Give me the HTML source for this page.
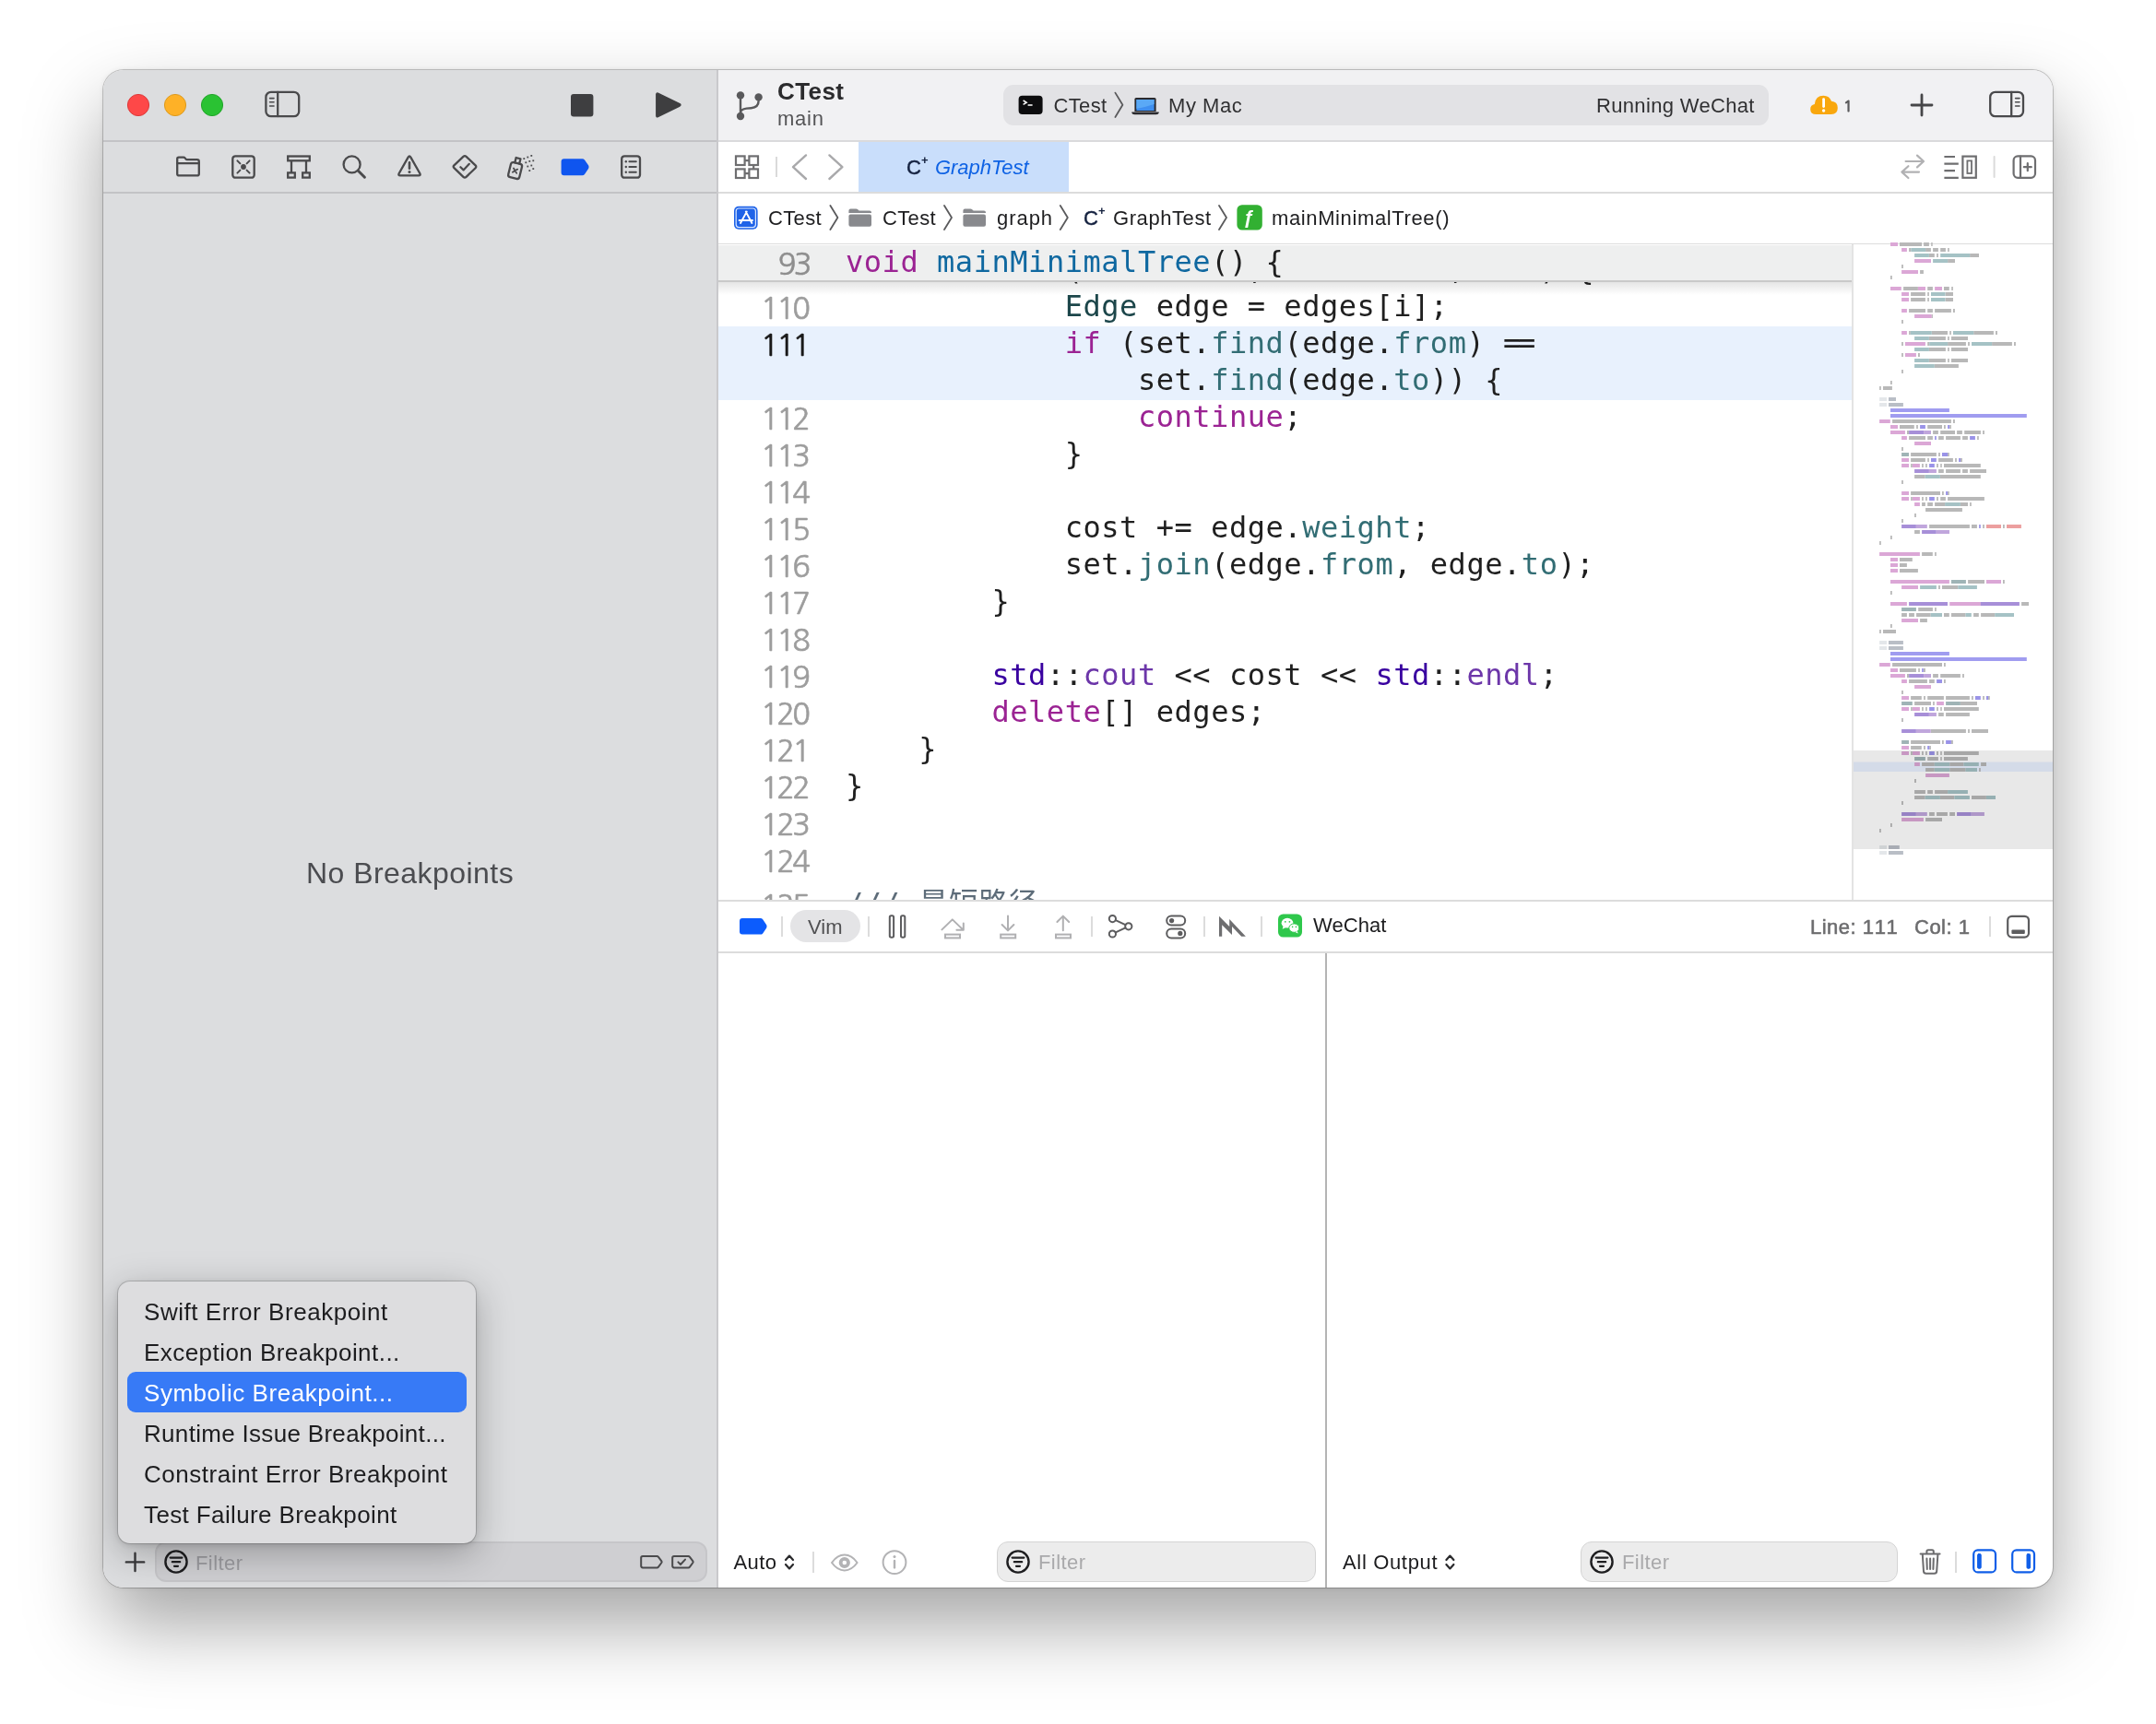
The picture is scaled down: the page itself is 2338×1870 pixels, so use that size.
<!DOCTYPE html>
<html lang="en">
<head>
<meta charset="utf-8">
<title>CTest — GraphTest</title>
<style>
*{box-sizing:border-box;margin:0;padding:0}
html,body{width:2338px;height:1870px;overflow:hidden;background:#fff}
body{position:relative;font-family:"Liberation Sans","Noto Sans CJK SC",sans-serif;color:#262626;-webkit-font-smoothing:antialiased}
#win{position:absolute;left:112px;top:76px;width:2114px;height:1646px;border-radius:22px;overflow:hidden;background:#fff;
  box-shadow:0 0 0 1px rgba(0,0,0,.20),0 40px 84px rgba(0,0,0,.36),0 0 6px rgba(0,0,0,.08)}
#pg{position:absolute;left:-112px;top:-76px;width:2338px;height:1870px;will-change:transform}
.a{position:absolute}
.t{position:absolute;white-space:pre;line-height:1}
svg{position:absolute;overflow:visible}
/* sidebar */
#side{left:112px;top:76px;width:665px;height:1646px;background:#dcdddf}
#sdiv{left:777px;top:76px;width:2px;height:1646px;background:#c9c9cc}
.hl{position:absolute;height:2px}
/* toolbar */
#tbar{left:779px;top:76px;width:1447px;height:76px;background:#f1f1f3}
#pill{left:1088px;top:92px;width:830px;height:44px;border-radius:11px;background:#e2e2e5}
#tabs{left:779px;top:154px;width:1447px;height:54px;background:#fff}
#tabsel{left:931px;top:154px;width:228px;height:54px;background:#c9defb}
#crumb{left:779px;top:210px;width:1447px;height:54px;background:#fff}
/* editor */
#ed{left:779px;top:265px;width:1230px;height:712px;background:#fff;overflow:hidden}
#sticky{left:779px;top:266px;width:1230px;height:38px;background:#eeefef}
#stickyline{left:779px;top:304px;width:1230px;height:2px;background:#c9c9c9}
#stickysh{left:779px;top:306px;width:1230px;height:14px;background:linear-gradient(rgba(0,0,0,.10),rgba(0,0,0,0))}
#cur{left:779px;top:354px;width:1230px;height:80px;background:#e8f1fd}
.ln{position:absolute;left:779px;width:97.5px;text-align:right;font-family:"NanumGothic","Liberation Sans",sans-serif;font-size:32.5px;-webkit-text-stroke:.6px currentColor;color:#9d9d9d;line-height:40px;height:40px;white-space:pre}
.ln span{display:inline-block;width:17.2px;text-align:left}
.cl{position:absolute;left:917px;font-family:"DejaVu Sans Mono","Liberation Mono","Noto Sans CJK SC",monospace;font-size:32px;letter-spacing:.54px;line-height:40px;height:40px;white-space:pre;color:#1f1f1f}
.eq{letter-spacing:-3.4px}.k{color:#9b2393}.fn{color:#0f68a0}.ty{color:#1c464a}.m{color:#326d74}.p{color:#3900a0}.pf{color:#6c36a9}.cm{color:#5d6c79}
/* minimap */
#mm{left:2009px;top:265px;width:217px;height:712px;background:#fff}
#mmline{left:2008px;top:265px;width:2px;height:712px;background:#e3e3e3}
/* debug bar */
#dbar{left:779px;top:979px;width:1447px;height:53px;background:#fff}
#vim{left:857px;top:987px;width:76px;height:35px;border-radius:17.5px;background:#e4e4e6}
.vs{position:absolute;width:2px;background:#dcdcdc}
#split{left:1437px;top:1034px;width:2px;height:688px;background:#b4b4b4}
.ff{position:absolute;height:44px;border-radius:12px;border:1.5px solid #d4d4d4;background:#ececec}
#sff{left:168px;top:1672px;width:599px;height:44px;border-radius:12px;position:absolute;background:#cfcfd2;border:2px solid #c6c6c9}
/* menu */
#menu{left:128px;top:1390px;width:388px;height:284px;border-radius:13px;background:#dddddf;
  box-shadow:0 0 0 1px rgba(0,0,0,.16),0 10px 40px rgba(0,0,0,.28),0 2px 6px rgba(0,0,0,.12)}
#msel{left:138px;top:1488px;width:368px;height:44px;border-radius:9px;background:#377af6}
.mi{position:absolute;left:156px;font-size:26px;letter-spacing:.54px;color:#1d1d1f;white-space:pre;line-height:44px;height:44px}
</style>
</head>
<body>
<div id="win"><div id="pg">
<!-- ===== sidebar ===== -->
<div class="a" id="side"></div>
<div class="hl" style="left:112px;top:152px;width:665px;background:#c3c3c6"></div>
<div class="hl" style="left:112px;top:208px;width:665px;background:#c3c3c6"></div>
<!-- traffic lights -->
<svg style="left:136px;top:100px" width="108" height="28" viewBox="136 100 108 28">
 <circle cx="150" cy="114" r="11.6" fill="#fe4848" stroke="#dc3a3a" stroke-width="1"/>
 <circle cx="190" cy="114" r="11.6" fill="#feb127" stroke="#dc9a1f" stroke-width="1"/>
 <circle cx="230" cy="114" r="11.6" fill="#2ac233" stroke="#22a52a" stroke-width="1"/>
</svg>
<!-- sidebar toggle -->
<svg style="left:285px;top:96px" width="44" height="34" viewBox="285 96 44 34" fill="none" stroke="#4a4a4c" stroke-width="2.3" stroke-linecap="round">
 <rect x="288.4" y="99.8" width="35.8" height="26.4" rx="5.5"/>
 <path d="M301.2 100v26"/>
 <path d="M292.6 106.600h4.400M292.6 110.800h4.400M292.6 115h4.400" stroke-width="1.600"/>
</svg>
<!-- stop / play -->
<svg style="left:615px;top:96px" width="130" height="36" viewBox="615 96 130 36">
 <rect x="619" y="102" width="24.4" height="24.4" rx="3" fill="#3e3e40"/>
 <path d="M713.4 101.2 L737 112.6 Q739 113.8 737 115 L713.4 126.6 Q711.8 127.2 711.8 125.4 L711.8 102.4 Q711.8 100.6 713.4 101.2Z" fill="#3e3e40" stroke="#3e3e40" stroke-width="1.4" stroke-linejoin="round"/>
</svg>
<!-- navigator icons -->
<svg style="left:186px;top:162px" width="520" height="38" viewBox="186 162 520 38" fill="none" stroke="#4a4a4c" stroke-width="2.3" stroke-linecap="round" stroke-linejoin="round">
 <!-- folder -->
 <path d="M192.2 174.4v-2.2q0-1.6 1.6-1.6h5.2q1 0 1.6.8l.8 1q.6.8 1.6.8h10.8q2 0 2 2v13.2q0 2-2 2h-19.600q-2 0-2-2z"/>
 <path d="M192.2 177.200h23.600"/>
 <!-- box x -->
 <rect x="252.300" y="169.300" width="23.400" height="23.400" rx="3"/>
 <circle cx="264" cy="181" r="2.900" fill="#4a4a4c" stroke="none"/>
 <path d="M257.400 174.400l3 3M270.600 174.400l-3 3M257.400 187.600l3-3M270.600 187.600l-3-3" stroke-width="2"/>
 <!-- hierarchy -->
 <rect x="312.200" y="169.500" width="23.600" height="4.800" stroke-linejoin="miter"/>
 <path d="M316 174.500v12.500M332 174.500v12.500" stroke-linecap="butt"/>
 <rect x="312.200" y="187.400" width="7.600" height="5.200" stroke-linejoin="miter"/>
 <rect x="328.200" y="187.400" width="7.600" height="5.200" stroke-linejoin="miter"/>
 <!-- search -->
 <circle cx="381.600" cy="178.400" r="9"/>
 <path d="M388.400 185.200l7 7" stroke-width="3"/>
 <!-- warning -->
 <path d="M442.600 170.600q1.400-2.200 2.800 0l10 17.600q1 2.200-1.400 2.200h-20q-2.400 0-1.400-2.200z"/>
 <path d="M444 176.400v6.400" stroke-width="2.600"/>
 <circle cx="444" cy="186.400" r="1.500" fill="#4a4a4c" stroke="none"/>
 <!-- diamond check -->
 <path d="M502.400 169.800q1.600-1.400 3.200 0l10 9.600q1.400 1.400 0 2.800l-10 9.600q-1.600 1.400-3.200 0l-10-9.600q-1.400-1.400 0-2.800z"/>
 <path d="M499.400 181.200l3.200 3.200 6.200-6.600" stroke-width="2.200"/>
 <!-- spray -->
 <g transform="translate(1.6 -.4) rotate(14 558 184)">
  <rect x="551.200" y="177.400" width="12.400" height="16.400" rx="2.600"/>
  <path d="M555 177.200v-5.400h5v5.400" />
  <path d="M555.200 183.600l4.400 4.400M559.600 183.600l-4.400 4.400" stroke-width="1.800"/>
 </g>
 <g fill="#4a4a4c" stroke="none">
  <rect x="567.400" y="171.200" width="1.800" height="1.800"/><rect x="571.400" y="169.600" width="1.800" height="1.800"/><rect x="575.400" y="168" width="1.800" height="1.800"/>
  <rect x="569.400" y="175.400" width="1.800" height="1.800"/><rect x="573.400" y="174" width="1.800" height="1.800"/><rect x="577.400" y="173.400" width="1.800" height="1.800"/>
  <rect x="571.400" y="179.600" width="1.800" height="1.800"/><rect x="575.400" y="178.600" width="1.800" height="1.800"/>
  <rect x="573.400" y="184.200" width="1.800" height="1.800"/><rect x="577.400" y="182.200" width="1.800" height="1.800"/>
 </g>
 <!-- breakpoint -->
 <path d="M611.600 172.200h19.800q1.600 0 2.600 1.200l4.200 6.200q.8 1.600 0 3.200l-4.200 6.200q-1 1.200-2.600 1.200h-19.800q-3 0-3-3v-12q0-3 3-3z" fill="#0f55ef" stroke="none"/>
 <!-- report -->
 <rect x="674.200" y="169.300" width="19.800" height="23.400" rx="3"/>
 <path d="M682.400 175.200h7.400M682.400 181h7.400M682.400 186.800h7.400" stroke-width="2"/>
 <g fill="#4a4a4c" stroke="none"><circle cx="678.800" cy="175.200" r="1.200"/><circle cx="678.800" cy="181" r="1.200"/><circle cx="678.800" cy="186.800" r="1.200"/></g>
</svg>
<div class="t" style="left:332px;top:931px;font-size:32px;letter-spacing:.45px;color:#4b4c50">No Breakpoints</div>
<!-- sidebar bottom filter -->
<div id="sff"></div>
<svg style="left:132px;top:1676px" width="640" height="36" viewBox="132 1676 640 36" fill="none" stroke="#2a2a2c" stroke-width="2.2" stroke-linecap="round" stroke-linejoin="round">
 <path d="M136.800 1694.400h19.400M146.500 1684.700v19.400" stroke="#3a3a3c" stroke-width="2.400"/>
 <circle cx="191" cy="1694" r="11.600" stroke="#1e1e20" stroke-width="2.400"/>
 <path d="M184.600 1689.600h12.800M186.800 1694.200h8.400M189 1698.800h4" stroke="#1e1e20" stroke-width="2.200"/>
 <path d="M697 1688h15.400q1 0 1.600.8l3.400 4.600q.6.800 0 1.600l-3.400 4.600q-.6.800-1.600.8h-15.400q-1.800 0-1.800-1.800v-8.800q0-1.800 1.800-1.800z" stroke="#4a4a4c" stroke-width="2"/>
 <path d="M731 1688h15.400q1 0 1.600.8l3.400 4.600q.6.800 0 1.600l-3.400 4.600q-.6.800-1.600.8h-15.400q-1.800 0-1.800-1.800v-8.800q0-1.800 1.800-1.800z" stroke="#4a4a4c" stroke-width="2"/>
 <path d="M735.400 1694.400l2.600 2.600 5-5.400" stroke="#4a4a4c" stroke-width="2"/>
</svg>
<div class="t" style="left:212px;top:1684.500px;font-size:22px;letter-spacing:.43px;color:#9c9ca0">Filter</div>
<!-- ===== toolbar ===== -->
<div class="a" id="tbar"></div>
<div class="hl" style="left:779px;top:152px;width:1447px;background:#dadadc"></div>
<div class="a" id="sdiv"></div>
<!-- branch icon -->
<svg style="left:794px;top:94px" width="40" height="42" viewBox="794 94 40 42" fill="none" stroke="#59595b" stroke-width="2.4" stroke-linecap="round">
 <path d="M803 107v15M822.600 109.600q0 7-8 7.600l-5 .4q-6.600.6-6.600 5"/>
 <g fill="#59595b" stroke="none"><circle cx="803" cy="103.400" r="4.200"/><circle cx="803" cy="126" r="4.200"/><circle cx="822.600" cy="105.400" r="4.200"/></g>
</svg>
<div class="t" style="left:843px;top:86px;font-size:26px;font-weight:700;color:#2b2b2d;letter-spacing:.4px">CTest</div>
<div class="t" style="left:843px;top:118px;font-size:22px;color:#555557;letter-spacing:.75px">main</div>
<div class="a" id="pill"></div>
<!-- terminal icon -->
<svg style="left:1104px;top:103px" width="28" height="22" viewBox="1104 103 28 22">
 <rect x="1104.600" y="103.800" width="26" height="20.200" rx="4" fill="#0c0c0e"/>
 <path d="M1109.600 109l3.600 2.200-3.600 2.200M1114.600 114h5" fill="none" stroke="#fff" stroke-width="1.500"/>
</svg>
<div class="t" style="left:1142.5px;top:103.5px;font-size:22px;letter-spacing:.35px;color:#303032">CTest</div>
<svg style="left:1206px;top:98px" width="16" height="32" viewBox="1206 98 16 32" fill="none" stroke="#5a5a5c" stroke-width="1.800" stroke-linecap="round" stroke-linejoin="round"><path d="M1209.400 100.600l8 13.200-8 13.200"/></svg>
<!-- laptop -->
<svg style="left:1226px;top:104px" width="32" height="22" viewBox="1226 104 32 22">
 <path d="M1232 106h20q1.600 0 1.600 1.600v13.400h-23.200v-13.400q0-1.600 1.600-1.600z" fill="#2a2a2e"/>
 <rect x="1232.400" y="108" width="19.200" height="12" fill="#3f8ff0"/>
 <path d="M1232.400 108h19.200v5q-9 3-19.200 5z" fill="#5aa9f6"/>
 <path d="M1227.600 121.400h28.800q.6 0 .4.800-.6 2-3 2h-23.600q-2.400 0-3-2-.2-.8.400-.8z" fill="#2a2a2e"/>
</svg>
<div class="t" style="left:1267px;top:103.5px;font-size:22px;letter-spacing:.55px;color:#303032">My Mac</div>
<div class="t" style="left:1731px;top:103.5px;font-size:22px;letter-spacing:.33px;color:#303032">Running WeChat</div>
<!-- cloud warning -->
<svg style="left:1961px;top:102px" width="34" height="24" viewBox="1961 102 34 24">
 <path d="M1969.600 124q-6.400 0-6.400-5.600 0-4.600 4.600-5.400 1-9.200 9.600-9.200 6.600 0 8.600 6 6.800.6 6.800 7.200 0 7-7 7z" fill="#f9a70d"/>
 <path d="M1977.600 107.600v8" stroke="#fff" stroke-width="2.800" stroke-linecap="round"/><circle cx="1977.600" cy="120" r="1.700" fill="#fff"/>
</svg>
<div class="t" style="left:1999px;top:107px;font-size:16.5px;font-family:NanumGothic,'Liberation Sans',sans-serif;color:#5a5a5c;-webkit-text-stroke:1px #5a5a5c">1</div>
<svg style="left:2068px;top:98px" width="32" height="32" viewBox="2068 98 32 32" fill="none" stroke="#464648" stroke-width="2.800" stroke-linecap="round"><path d="M2073 114h22M2084 103v22"/></svg>
<svg style="left:2153px;top:95px" width="46" height="36" viewBox="2153 95 46 36" fill="none" stroke="#4a4a4c" stroke-width="2.300" stroke-linecap="round">
 <rect x="2158.200" y="99.800" width="35.800" height="26.400" rx="5.500"/>
 <path d="M2181.200 100v26"/>
 <path d="M2185.600 106.600h4.400M2185.600 110.800h4.400M2185.600 115h4.400" stroke-width="1.600"/>
</svg>
<!-- ===== tab bar ===== -->
<div class="a" id="tabs"></div>
<div class="a" id="tabsel"></div>
<div class="hl" style="left:779px;top:208px;width:1447px;background:#dcdcdc"></div>
<svg style="left:794px;top:165px" width="130" height="32" viewBox="794 165 130 32" fill="none" stroke="#6e6e70" stroke-width="2.200">
 <rect x="798" y="169.400" width="9.600" height="9.600"/><rect x="812.400" y="169.400" width="9.600" height="9.600"/>
 <rect x="798" y="183.400" width="9.600" height="9.600"/><rect x="812.400" y="183.400" width="9.600" height="9.600"/>
 <path d="M807.600 174.200h4.800M817.200 179v4.400M807.600 188.200h4.800" />
 <path d="M842 170v22" stroke="#dadada" stroke-width="2"/>
 <path d="M874 168.400l-14 12.800 14 12.800M899.400 168.400l14 12.800-14 12.800" stroke="#a9a9ab" stroke-width="2.400" stroke-linecap="round" stroke-linejoin="round"/>
</svg>
<div class="t" style="left:983px;top:171px;font-size:22px;color:#14213f;-webkit-text-stroke:.45px #14213f">C</div>
<div class="t" style="left:999px;top:167px;font-size:13px;font-weight:700;color:#14213f">+</div>
<div class="t" style="left:1014px;top:171px;font-size:22px;font-style:italic;color:#0e62e4;letter-spacing:-.05px">GraphTest</div>
<svg style="left:2058px;top:165px" width="154" height="32" viewBox="2058 165 154 32" fill="none" stroke="#6e6e70" stroke-width="2.200" stroke-linecap="round" stroke-linejoin="round">
 <g stroke="#b1b1b3"><path d="M2066.600 175h19.200M2079 168.600l7 6.400-7 6.400M2081 186.600h-18.600M2069.400 180.200l-7 6.400 7 6.400"/></g>
 <path d="M2108.400 170h11.600M2108.400 177.600h15.400M2108.400 185.200h11.600M2108.400 192.800h15.400" stroke-linecap="butt"/>
 <rect x="2128.400" y="169.600" width="14.400" height="23.200" stroke-linejoin="miter"/>
 <rect x="2133.400" y="174.400" width="4.600" height="13.600" stroke-width="1.800" stroke-linejoin="miter"/>
 <path d="M2162.600 170v22" stroke="#dadada" stroke-width="2"/>
 <rect x="2183.600" y="169.400" width="23.400" height="23.400" rx="4.500"/>
 <path d="M2191 169.600v23M2194.800 181.200h8M2198.800 177.200v8"/>
</svg>
<!-- ===== breadcrumb ===== -->
<div class="a" id="crumb"></div>
<div class="hl" style="left:779px;top:264px;width:1447px;background:#dcdcdc"></div>
<svg style="left:794px;top:220px" width="790" height="32" viewBox="794 220 790 32">
 <!-- app icon -->
 <rect x="796" y="223.800" width="25.600" height="25" rx="5" fill="#1f63e8"/>
 <rect x="798.200" y="226" width="21.200" height="20.600" rx="3" fill="none" stroke="#d7e6ff" stroke-width="1.200"/>
 <path d="M808.800 229.600l6.600 12.400M809.800 229.600l-6.800 12.400M801.600 239h14.400" fill="none" stroke="#fff" stroke-width="1.900" stroke-linecap="round"/>
 <!-- chevrons -->
 <g fill="none" stroke="#5a5a5c" stroke-width="1.800" stroke-linecap="round" stroke-linejoin="round">
  <path d="M900.400 223l8 13-8 13M1024 223l8 13-8 13M1149.800 223l8 13-8 13M1322 223l8 13-8 13"/>
 </g>
 <!-- folders -->
 <g fill="#88898d">
  <path d="M920.400 231v-2.600q0-2 2-2h6q1 0 1.600.6l1 1q.6.600 1.600.600h10.400q2 0 2 2v.4z"/><rect x="920.400" y="232.400" width="24.600" height="13.400" rx="2"/>
  <path d="M1044.400 231v-2.600q0-2 2-2h6q1 0 1.600.6l1 1q.6.600 1.600.600h10.400q2 0 2 2v.4z"/><rect x="1044.400" y="232.400" width="24.600" height="13.400" rx="2"/>
 </g>
 <!-- func icon -->
 <rect x="1341.400" y="222.200" width="27.400" height="27.400" rx="5.500" fill="#32b032"/>
</svg>
<div class="t" style="left:833px;top:226px;font-size:22px;letter-spacing:.35px;color:#1e1e20">CTest</div>
<div class="t" style="left:957px;top:226px;font-size:22px;letter-spacing:.35px;color:#1e1e20">CTest</div>
<div class="t" style="left:1081px;top:226px;font-size:22px;letter-spacing:.95px;color:#1e1e20">graph</div>
<div class="t" style="left:1175px;top:226px;font-size:22px;color:#14213f;-webkit-text-stroke:.45px #14213f">C</div>
<div class="t" style="left:1191px;top:222px;font-size:13px;font-weight:700;color:#14213f">+</div>
<div class="t" style="left:1207px;top:226px;font-size:22px;letter-spacing:.58px;color:#1e1e20">GraphTest</div>
<div class="t" style="left:1348px;top:225px;font-size:21px;font-weight:700;font-style:italic;color:#fff">ƒ</div>
<div class="t" style="left:1379px;top:226px;font-size:22px;letter-spacing:.62px;color:#1e1e20">mainMinimalTree()</div>
<!-- ===== editor ===== -->
<div class="a" id="ed"><div class="a" style="left:-779px;top:-265px;width:2338px;height:1870px">
<div class="a" id="cur"></div>
<div class="cl" style="top:272px">        <span class="k">for</span> (<span class="k">int</span> i = 0; i &lt; count; i++) {</div>
<div class="ln" style="top:315px"><span>1</span><span>1</span><span>0</span></div>
<div class="cl" style="top:312px">            <span class="ty">Edge</span> edge = edges[i];</div>
<div class="ln" style="top:355px;color:#1a1a1a"><span>1</span><span>1</span><span>1</span></div>
<div class="cl" style="top:352px">            <span class="k">if</span> (set.<span class="m">find</span>(edge.<span class="m">from</span>) <span class="eq">=</span>=</div>
<div class="cl" style="top:392px">                set.<span class="m">find</span>(edge.<span class="m">to</span>)) {</div>
<div class="ln" style="top:435px"><span>1</span><span>1</span><span>2</span></div>
<div class="cl" style="top:432px">                <span class="k">continue</span>;</div>
<div class="ln" style="top:475px"><span>1</span><span>1</span><span>3</span></div>
<div class="cl" style="top:472px">            }</div>
<div class="ln" style="top:515px"><span>1</span><span>1</span><span>4</span></div>
<div class="ln" style="top:555px"><span>1</span><span>1</span><span>5</span></div>
<div class="cl" style="top:552px">            cost += edge.<span class="m">weight</span>;</div>
<div class="ln" style="top:595px"><span>1</span><span>1</span><span>6</span></div>
<div class="cl" style="top:592px">            set.<span class="m">join</span>(edge.<span class="m">from</span>, edge.<span class="m">to</span>);</div>
<div class="ln" style="top:635px"><span>1</span><span>1</span><span>7</span></div>
<div class="cl" style="top:632px">        }</div>
<div class="ln" style="top:675px"><span>1</span><span>1</span><span>8</span></div>
<div class="ln" style="top:715px"><span>1</span><span>1</span><span>9</span></div>
<div class="cl" style="top:712px">        <span class="p">std</span>::<span class="pf">cout</span> &lt;&lt; cost &lt;&lt; <span class="p">std</span>::<span class="pf">endl</span>;</div>
<div class="ln" style="top:755px"><span>1</span><span>2</span><span>0</span></div>
<div class="cl" style="top:752px">        <span class="k">delete</span>[] edges;</div>
<div class="ln" style="top:795px"><span>1</span><span>2</span><span>1</span></div>
<div class="cl" style="top:792px">    }</div>
<div class="ln" style="top:835px"><span>1</span><span>2</span><span>2</span></div>
<div class="cl" style="top:832px">}</div>
<div class="ln" style="top:875px"><span>1</span><span>2</span><span>3</span></div>
<div class="ln" style="top:915px"><span>1</span><span>2</span><span>4</span></div>
<div class="ln" style="top:962.5px"><span>1</span><span>2</span><span>5</span></div>
<div class="cl" style="top:959.5px"><span class="cm">/// 最短路径</span></div>
<div class="a" id="stickysh"></div>
<div class="a" id="sticky"></div>
<div class="a" id="stickyline"></div>
<div class="ln" style="top:267px;left:780.5px;color:#8e8e8e"><span>9</span><span>3</span></div>
<div class="cl" style="top:264px"><span class="k">void</span> <span class="fn">mainMinimalTree</span>() {</div>
</div></div>
<!-- ===== minimap ===== -->
<div class="a" id="mm"></div>
<svg style="left:2009px;top:265px" width="217" height="712" viewBox="2009 265 217 712">
<rect x="2010" y="826.5" width="216" height="10.5" fill="#e9f1ff"/>
<path fill="#dba7d6" d="M2050 263.1h8v3.8h-8zM2062.1 269.1h5.8v3.8h-5.8zM2076.1 281.1h17.9v3.8h-17.9zM2062.1 293.1h17.9v3.8h-17.9zM2050 311.1h11.8v3.8h-11.8zM2080 311.1h8v3.8h-8zM2098.1 311.1h7.9v3.8h-7.9zM2062.1 317.1h7.9v3.8h-7.9zM2062.1 323.1h7.9v3.8h-7.9zM2062.1 335.1h5.8v3.8h-5.8zM2076.1 341.1h18.7v3.8h-18.7zM2062.1 359.1h5.8v3.8h-5.8zM2066 371.1h21.9v3.8h-21.9zM2066 383.1h11.9v3.8h-11.9zM2038.1 455.1h11.7v3.8h-11.7zM2050 461.1h8v3.8h-8zM2050 467.1h15.9v3.8h-15.9zM2062.1 473.1h5.8v3.8h-5.8zM2076.1 479.1h17.9v3.8h-17.9zM2062.1 497.1h7.9v3.8h-7.9zM2062.1 503.1h7.9v3.8h-7.9zM2073.8 503.1h8.1v3.8h-8.1zM2062.1 533.1h7.9v3.8h-7.9zM2062.1 539.1h7.9v3.8h-7.9zM2073.8 539.1h8.1v3.8h-8.1zM2076.1 545.1h5.8v3.8h-5.8zM2038.1 599.1h43.8v3.8h-43.8zM2050 605.1h8v3.8h-8zM2050 611.1h8v3.8h-8zM2050 617.1h8v3.8h-8zM2050 629.1h63.9v3.8h-63.9zM2154 629.1h16v3.8h-16zM2062.1 635.1h17.9v3.8h-17.9zM2050 653.1h17.9v3.8h-17.9zM2114.2 653.1h33.7v3.8h-33.7zM2062.1 671.1h17.9v3.8h-17.9zM2038.1 719.1h11.7v3.8h-11.7zM2050 725.1h8v3.8h-8zM2050 731.1h15.9v3.8h-15.9zM2062.1 737.1h5.8v3.8h-5.8zM2076.1 743.1h17.9v3.8h-17.9zM2062.1 755.1h7.9v3.8h-7.9zM2100.1 761.1h7.8v3.8h-7.8zM2062.1 767.1h7.9v3.8h-7.9zM2073.8 767.1h8.1v3.8h-8.1zM2062.1 809.1h7.9v3.8h-7.9zM2062.1 815.1h7.9v3.8h-7.9zM2073.8 815.1h8.1v3.8h-8.1zM2076.1 827.1h5.8v3.8h-5.8zM2088.1 839.1h25.8v3.8h-25.8zM2062.1 887.1h23.8v3.8h-23.8z"/>
<path fill="#b8b8b8" d="M2060 263.1h24v3.8h-24zM2086.1 263.1h5.8v3.8h-5.8zM2094.2 263.1h1.5v3.8h-1.5zM2070.1 269.1h2.2v3.8h-2.2zM2088.1 269.1h5.8v3.8h-5.8zM2096.1 269.1h5.8v3.8h-5.8zM2104.2 269.1h5.7v3.8h-5.7zM2112.1 269.1h1.7v3.8h-1.7zM2091.9 275.1h5.9v3.8h-5.9zM2100.1 275.1h1.8v3.8h-1.8zM2136.1 275.1h9.9v3.8h-9.9zM2112.1 281.1h7.9v3.8h-7.9zM2062.1 287.1h1.8v3.8h-1.8zM2082.1 293.1h3.8v3.8h-3.8zM2050 299.1h1.8v3.8h-1.8zM2064.1 311.1h15.8v3.8h-15.8zM2090.2 311.1h5.7v3.8h-5.7zM2108 311.1h5.8v3.8h-5.8zM2116.2 311.1h1.7v3.8h-1.7zM2072.1 317.1h15.8v3.8h-15.8zM2090.2 317.1h1.7v3.8h-1.7zM2109.6 317.1h8.4v3.8h-8.4zM2072.1 323.1h15.8v3.8h-15.8zM2090.2 323.1h1.7v3.8h-1.7zM2109.6 323.1h8.4v3.8h-8.4zM2070.1 335.1h17.9v3.8h-17.9zM2090.2 335.1h5.7v3.8h-5.7zM2098.1 335.1h17.8v3.8h-17.8zM2118 335.1h1.9v3.8h-1.9zM2094.8 341.1h1.1v3.8h-1.1zM2062.1 347.1h1.8v3.8h-1.8zM2070.1 359.1h1.7v3.8h-1.7zM2094.8 359.1h17.2v3.8h-17.2zM2114.2 359.1h1.7v3.8h-1.7zM2140.2 359.1h21.7v3.8h-21.7zM2164 359.1h1.9v3.8h-1.9zM2091.9 365.1h18v3.8h-18zM2112.1 365.1h1.7v3.8h-1.7zM2116 365.1h18v3.8h-18zM2062.1 371.1h1.8v3.8h-1.8zM2090.2 371.1h2v3.8h-2zM2112.1 371.1h19.8v3.8h-19.8zM2134.1 371.1h1.8v3.8h-1.8zM2160.1 371.1h21.8v3.8h-21.8zM2184 371.1h1.9v3.8h-1.9zM2091.9 377.1h18v3.8h-18zM2112.1 377.1h1.7v3.8h-1.7zM2116 377.1h18v3.8h-18zM2062.1 383.1h1.8v3.8h-1.8zM2080 383.1h1.9v3.8h-1.9zM2091.9 389.1h18v3.8h-18zM2112.1 389.1h1.7v3.8h-1.7zM2116 389.1h18v3.8h-18zM2097.8 395.1h26.1v3.8h-26.1zM2062.1 401.1h1.8v3.8h-1.8zM2050 413.1h1.8v3.8h-1.8zM2038.1 419.1h1.7v3.8h-1.7zM2042 419.1h9.9v3.8h-9.9zM2052.1 455.1h63.8v3.8h-63.8zM2118 455.1h1.9v3.8h-1.9zM2060 461.1h15.8v3.8h-15.8zM2078.1 461.1h1.8v3.8h-1.8zM2090.2 461.1h15.8v3.8h-15.8zM2108 461.1h1.8v3.8h-1.8zM2114.2 461.1h1.7v3.8h-1.7zM2068 467.1h2v3.8h-2zM2096.1 467.1h5.8v3.8h-5.8zM2104.2 467.1h15.8v3.8h-15.8zM2122.1 467.1h5.8v3.8h-5.8zM2130.2 467.1h17.7v3.8h-17.7zM2150.1 467.1h1.8v3.8h-1.8zM2070.1 473.1h17.9v3.8h-17.9zM2090.2 473.1h5.7v3.8h-5.7zM2102.1 473.1h5.7v3.8h-5.7zM2110.1 473.1h15.8v3.8h-15.8zM2128.1 473.1h5.8v3.8h-5.8zM2144.1 473.1h1.7v3.8h-1.7zM2062.1 485.1h1.8v3.8h-1.8zM2072.1 491.1h27.8v3.8h-27.8zM2102.1 491.1h1.8v3.8h-1.8zM2112.1 491.1h1.7v3.8h-1.7zM2072.1 497.1h15.8v3.8h-15.8zM2090.2 497.1h1.7v3.8h-1.7zM2102.1 497.1h15.8v3.8h-15.8zM2120.1 497.1h1.8v3.8h-1.8zM2126.1 497.1h1.8v3.8h-1.8zM2072.1 503.1h1.7v3.8h-1.7zM2084.1 503.1h1.7v3.8h-1.7zM2088.1 503.1h1.7v3.8h-1.7zM2100.1 503.1h1.8v3.8h-1.8zM2104.2 503.1h1.6v3.8h-1.6zM2108 503.1h39.8v3.8h-39.8zM2102.1 509.1h5.7v3.8h-5.7zM2110.1 509.1h15.8v3.8h-15.8zM2128.1 509.1h5.8v3.8h-5.8zM2136.1 509.1h17.9v3.8h-17.9zM2076.1 515.1h11.5v3.8h-11.5zM2103.9 515.1h43.9v3.8h-43.9zM2062.1 521.1h1.8v3.8h-1.8zM2072.1 533.1h31.9v3.8h-31.9zM2106 533.1h1.8v3.8h-1.8zM2112.1 533.1h1.7v3.8h-1.7zM2072.1 539.1h1.7v3.8h-1.7zM2084.1 539.1h1.7v3.8h-1.7zM2088.1 539.1h1.7v3.8h-1.7zM2100.1 539.1h1.8v3.8h-1.8zM2104.2 539.1h5.7v3.8h-5.7zM2112.1 539.1h39.8v3.8h-39.8zM2084.1 545.1h3.8v3.8h-3.8zM2090.2 545.1h5.7v3.8h-5.7zM2098.1 545.1h10.9v3.8h-10.9zM2125.9 545.1h8.1v3.8h-8.1zM2136.1 545.1h1.7v3.8h-1.7zM2088.1 551.1h39.8v3.8h-39.8zM2076.1 557.1h1.8v3.8h-1.8zM2062.1 563.1h1.8v3.8h-1.8zM2092.1 569.1h43.8v3.8h-43.8zM2138 569.1h5.9v3.8h-5.9zM2150.1 569.1h1.8v3.8h-1.8zM2172 569.1h1.8v3.8h-1.8zM2076.1 575.1h5.8v3.8h-5.8zM2050 581.1h1.8v3.8h-1.8zM2038.1 587.1h1.7v3.8h-1.7zM2084.1 599.1h11.7v3.8h-11.7zM2098.1 599.1h1.7v3.8h-1.7zM2060 605.1h13.8v3.8h-13.8zM2060 611.1h7.9v3.8h-7.9zM2060 617.1h19.9v3.8h-19.9zM2134.1 629.1h17.9v3.8h-17.9zM2172 629.1h1.8v3.8h-1.8zM2102.1 635.1h1.8v3.8h-1.8zM2106 635.1h17.4v3.8h-17.4zM2050 641.1h1.8v3.8h-1.8zM2192.1 653.1h7.9v3.8h-7.9zM2080.2 659.1h15.7v3.8h-15.7zM2098.1 659.1h1.7v3.8h-1.7zM2062.1 665.1h5.8v3.8h-5.8zM2070.1 665.1h5.8v3.8h-5.8zM2078.1 665.1h15.6v3.8h-15.6zM2108 665.1h5.8v3.8h-5.8zM2116 665.1h15.5v3.8h-15.5zM2140.1 665.1h5.7v3.8h-5.7zM2148.1 665.1h15.1v3.8h-15.1zM2082.1 671.1h7.8v3.8h-7.8zM2050 677.1h1.8v3.8h-1.8zM2038.1 683.1h1.7v3.8h-1.7zM2042 683.1h14v3.8h-14zM2052.1 719.1h53.9v3.8h-53.9zM2108 719.1h1.8v3.8h-1.8zM2060 725.1h17.9v3.8h-17.9zM2080.2 725.1h1.7v3.8h-1.7zM2085.9 725.1h2v3.8h-2zM2068 731.1h2v3.8h-2zM2096.1 731.1h5.8v3.8h-5.8zM2104.2 731.1h21.7v3.8h-21.7zM2128.1 731.1h1.8v3.8h-1.8zM2070.1 737.1h19.8v3.8h-19.8zM2092.1 737.1h5.7v3.8h-5.7zM2108 737.1h1.8v3.8h-1.8zM2062.1 749.1h1.8v3.8h-1.8zM2072.1 755.1h11.7v3.8h-11.7zM2086.1 755.1h1.8v3.8h-1.8zM2090.2 755.1h17.7v3.8h-17.7zM2110.1 755.1h25.8v3.8h-25.8zM2138 755.1h1.8v3.8h-1.8zM2150.1 755.1h1.8v3.8h-1.8zM2156 755.1h1.8v3.8h-1.8zM2076.1 761.1h17.9v3.8h-17.9zM2096.1 761.1h1.7v3.8h-1.7zM2125.9 761.1h18.1v3.8h-18.1zM2072.1 767.1h1.7v3.8h-1.7zM2084.1 767.1h1.7v3.8h-1.7zM2088.1 767.1h1.7v3.8h-1.7zM2100.1 767.1h1.8v3.8h-1.8zM2104.2 767.1h1.6v3.8h-1.6zM2108 767.1h37.8v3.8h-37.8zM2102.1 773.1h5.7v3.8h-5.7zM2110.1 773.1h25.8v3.8h-25.8zM2062.1 779.1h1.8v3.8h-1.8zM2093.7 791.1h38.2v3.8h-38.2zM2134.1 791.1h1.8v3.8h-1.8zM2138 791.1h18v3.8h-18zM2072.1 803.1h31.9v3.8h-31.9zM2106 803.1h1.8v3.8h-1.8zM2115.9 803.1h2v3.8h-2zM2072.1 809.1h11.7v3.8h-11.7zM2086.1 809.1h1.8v3.8h-1.8zM2092.2 809.1h1.7v3.8h-1.7zM2072.1 815.1h1.7v3.8h-1.7zM2084.1 815.1h1.7v3.8h-1.7zM2088.1 815.1h1.7v3.8h-1.7zM2100.1 815.1h1.8v3.8h-1.8zM2104.2 815.1h1.6v3.8h-1.6zM2108 815.1h37.8v3.8h-37.8zM2090.2 821.1h11.7v3.8h-11.7zM2104.2 821.1h1.6v3.8h-1.6zM2108 821.1h25.9v3.8h-25.9zM2084.1 827.1h13.7v3.8h-13.7zM2114.2 827.1h15.3v3.8h-15.3zM2148.1 827.1h5.9v3.8h-5.9zM2088.1 833.1h9.7v3.8h-9.7zM2114.2 833.1h17.4v3.8h-17.4zM2146.1 833.1h1.7v3.8h-1.7zM2076.1 845.1h1.8v3.8h-1.8zM2076.1 857.1h11.8v3.8h-11.8zM2090.2 857.1h5.7v3.8h-5.7zM2098.1 857.1h14v3.8h-14zM2076.1 863.1h11.5v3.8h-11.5zM2103.9 863.1h15.3v3.8h-15.3zM2138 863.1h15.9v3.8h-15.9zM2062.1 869.1h1.8v3.8h-1.8zM2092.1 881.1h5.7v3.8h-5.7zM2100.1 881.1h11.8v3.8h-11.8zM2114.2 881.1h5.8v3.8h-5.8zM2088.1 887.1h17.9v3.8h-17.9zM2050 893.1h1.8v3.8h-1.8zM2038.1 899.1h1.7v3.8h-1.7z"/>
<path fill="#a5c2c5" d="M2072.3 269.1h15.8v3.8h-15.8zM2076.1 275.1h15.8v3.8h-15.8zM2104.2 275.1h32v3.8h-32zM2096.1 281.1h16v3.8h-16zM2094 317.1h15.5v3.8h-15.5zM2094 323.1h15.5v3.8h-15.5zM2071.8 359.1h23v3.8h-23zM2118 359.1h22.2v3.8h-22.2zM2076.1 365.1h15.8v3.8h-15.8zM2092.2 371.1h19.9v3.8h-19.9zM2138 371.1h22.1v3.8h-22.1zM2076.1 377.1h15.8v3.8h-15.8zM2076.1 389.1h15.8v3.8h-15.8zM2076.1 395.1h21.7v3.8h-21.7zM2087.6 515.1h16.3v3.8h-16.3zM2109.1 545.1h16.8v3.8h-16.8zM2082.1 635.1h17.8v3.8h-17.8zM2123.3 635.1h20.6v3.8h-20.6zM2093.7 665.1h12.3v3.8h-12.3zM2131.5 665.1h6.3v3.8h-6.3zM2163.2 665.1h20.8v3.8h-20.8zM2097.8 827.1h16.3v3.8h-16.3zM2129.5 827.1h16.3v3.8h-16.3zM2097.8 833.1h16.3v3.8h-16.3zM2131.5 833.1h12.5v3.8h-12.5zM2112.1 857.1h21.8v3.8h-21.8zM2087.6 863.1h16.3v3.8h-16.3zM2119.3 863.1h16.6v3.8h-16.6zM2154 863.1h10v3.8h-10z"/>
<path fill="#e4e7ea" d="M2038.1 431.1h7.9v3.8h-7.9zM2038.1 437.1h7.9v3.8h-7.9zM2038.1 695.1h7.9v3.8h-7.9zM2038.1 701.1h7.9v3.8h-7.9zM2038.1 917.1h7.9v3.8h-7.9zM2038.1 923.1h7.9v3.8h-7.9z"/>
<path fill="#b9bec6" d="M2048 431.1h8v3.8h-8zM2048 437.1h15.9v3.8h-15.9zM2048 695.1h15.9v3.8h-15.9zM2048 701.1h15.9v3.8h-15.9zM2048 917.1h11.8v3.8h-11.8zM2048 923.1h15.9v3.8h-15.9z"/>
<path fill="#a09cf0" d="M2050 443.1h63.9v3.8h-63.9zM2050 449.1h147.8v3.8h-147.8zM2050 707.1h63.9v3.8h-63.9zM2050 713.1h147.8v3.8h-147.8z"/>
<path fill="#9a93e8" d="M2082.1 461.1h5.8v3.8h-5.8zM2112.1 461.1h2v3.8h-2zM2098.1 473.1h1.7v3.8h-1.7zM2136.1 473.1h5.8v3.8h-5.8zM2106 491.1h6.1v3.8h-6.1zM2094 497.1h5.8v3.8h-5.8zM2124.1 497.1h2v3.8h-2zM2092.1 503.1h5.7v3.8h-5.7zM2110.1 533.1h2v3.8h-2zM2092.1 539.1h5.7v3.8h-5.7zM2146.1 569.1h1.7v3.8h-1.7zM2084.1 725.1h1.7v3.8h-1.7zM2100.1 737.1h5.9v3.8h-5.9zM2142 755.1h5.8v3.8h-5.8zM2154 755.1h2v3.8h-2zM2092.1 767.1h5.7v3.8h-5.7zM2110.1 803.1h5.8v3.8h-5.8zM2090.2 809.1h2v3.8h-2zM2092.1 815.1h5.7v3.8h-5.7z"/>
<path fill="#a78fd8" d="M2070.1 467.1h16v3.8h-16zM2076.1 509.1h15.8v3.8h-15.8zM2062.1 569.1h15.8v3.8h-15.8zM2084.1 575.1h15.7v3.8h-15.7zM2070.1 653.1h41.9v3.8h-41.9zM2147.8 653.1h42.1v3.8h-42.1zM2070.1 731.1h16v3.8h-16zM2076.1 773.1h15.8v3.8h-15.8zM2062.1 791.1h15.8v3.8h-15.8zM2062.1 881.1h15.8v3.8h-15.8zM2122.1 881.1h15.7v3.8h-15.7z"/>
<path fill="#c0a6dc" d="M2086.1 467.1h7.9v3.8h-7.9zM2091.9 509.1h8v3.8h-8zM2077.9 569.1h11.9v3.8h-11.9zM2099.9 575.1h14.1v3.8h-14.1zM2086.1 731.1h7.9v3.8h-7.9zM2091.9 773.1h8v3.8h-8zM2077.9 791.1h15.8v3.8h-15.8zM2077.9 881.1h11.9v3.8h-11.9zM2137.8 881.1h14.1v3.8h-14.1z"/>
<path fill="#9fb4b6" d="M2062.1 491.1h7.9v3.8h-7.9zM2116 629.1h15.9v3.8h-15.9zM2062.1 659.1h15.8v3.8h-15.8zM2062.1 761.1h11.7v3.8h-11.7zM2110.1 761.1h15.8v3.8h-15.8zM2062.1 803.1h7.9v3.8h-7.9zM2076.1 821.1h11.8v3.8h-11.8z"/>
<path fill="#ec9f9f" d="M2154 569.1h16v3.8h-16zM2176 569.1h15.9v3.8h-15.9z"/>
<rect x="2010" y="814" width="216" height="107" fill="#000" fill-opacity=".09"/>
</svg>
<div class="a" id="mmline"></div>
<!-- ===== debug bar ===== -->
<div class="hl" style="left:779px;top:976px;width:1447px;background:#dcdcdc"></div>
<div class="a" id="dbar"></div>
<div class="hl" style="left:779px;top:1032px;width:1447px;background:#dcdcdc"></div>
<div class="a" id="vim"></div>
<div class="t" style="left:876px;top:994.700px;font-size:22px;color:#515153">Vim</div>
<div class="vs" style="left:847px;top:994px;height:22px"></div>
<div class="vs" style="left:941px;top:994px;height:22px"></div>
<div class="vs" style="left:1183px;top:994px;height:22px"></div>
<div class="vs" style="left:1305px;top:994px;height:22px"></div>
<div class="vs" style="left:1367px;top:994px;height:22px"></div>
<div class="vs" style="left:2157px;top:994px;height:22px"></div>
<svg style="left:798px;top:986px" width="620" height="38" viewBox="798 986 620 38" fill="none" stroke="#5c5c5e" stroke-width="2" stroke-linecap="round" stroke-linejoin="round">
 <path d="M805 996h19.600q1.600 0 2.600 1.200l4 6q.8 1.600 0 3.200l-4 6q-1 1.200-2.600 1.200h-19.600q-3 0-3-3v-11.600q0-3 3-3z" fill="#0c5cfd" stroke="none"/>
 <rect x="964.800" y="993.300" width="4.300" height="23.400" rx="1.600"/><rect x="977" y="993.300" width="4.300" height="23.400" rx="1.600"/>
 <g stroke="#b0b0b2">
  <path d="M1021.400 1008.400l11.400-11 11.400 11M1044.800 1001.400v7.400h-7.400"/><rect x="1025" y="1013.600" width="16" height="3.800" stroke-linejoin="miter"/>
  <path d="M1093 993.400v15.400M1086.600 1003l6.400 6.400 6.400-6.400"/><rect x="1085.200" y="1013.600" width="16" height="3.800" stroke-linejoin="miter"/>
  <path d="M1152.800 1009.200v-15.400M1146.400 1000l6.400-6.400 6.400 6.400"/><rect x="1145" y="1013.600" width="16" height="3.800" stroke-linejoin="miter"/>
 </g>
 <circle cx="1206.400" cy="996.600" r="3.600"/><circle cx="1223.800" cy="1004.800" r="3.600"/><circle cx="1206.400" cy="1013" r="3.600"/>
 <path d="M1209.800 998.200l10.600 5M1209.800 1011.400l10.600-5"/>
 <rect x="1265.200" y="993.600" width="20" height="10" rx="5"/><rect x="1265.200" y="1007.400" width="20" height="10" rx="5"/>
 <circle cx="1270.600" cy="998.600" r="2.600" fill="#5c5c5e" stroke="none"/><circle cx="1279.800" cy="1012.400" r="2.600" fill="#5c5c5e" stroke="none"/>
 <path d="M1322 993.700L1333.200 1004.900V997.100L1350.900 1015.700H1346.200L1336 1005.100V1013.900L1325.200 1003.200V1015.700H1322z" fill="#6e6e70" stroke="none"/>
 <rect x="1386" y="991.400" width="26" height="25.200" rx="5.500" fill="#2fc84c" stroke="none"/>
 <ellipse cx="1396" cy="1001.200" rx="6.400" ry="5.400" fill="#fff" stroke="none"/><path d="M1391.600 1004.800l-1 3 3.400-1.600z" fill="#fff" stroke="none"/>
 <ellipse cx="1403.400" cy="1006.600" rx="5.600" ry="4.700" fill="#fff" stroke="#2fc84c" stroke-width="1"/><path d="M1406.600 1010l1.200 2.400-3-1.200z" fill="#fff" stroke="none"/>
 <g fill="#2fc84c" stroke="none"><circle cx="1393.800" cy="999.800" r=".9"/><circle cx="1398.400" cy="999.800" r=".9"/><circle cx="1401.600" cy="1005.400" r=".8"/><circle cx="1405.400" cy="1005.400" r=".8"/></g>
</svg>
<div class="t" style="left:1424px;top:993px;font-size:22px;color:#1c1c1e;letter-spacing:.05px">WeChat</div>
<div class="t" style="left:1963px;top:995px;font-size:22px;color:#6c6c6e;-webkit-text-stroke:.55px #6c6c6e;letter-spacing:.5px">Line: <span style="letter-spacing:2.2px">111</span></div>
<div class="t" style="left:2076px;top:995px;font-size:22px;color:#6c6c6e;-webkit-text-stroke:.55px #6c6c6e;letter-spacing:.5px">Col: <span style="letter-spacing:2.2px">1</span></div>
<svg style="left:2172px;top:988px" width="34" height="34" viewBox="2172 988 34 34" fill="none" stroke="#5c5c5e" stroke-width="2.200">
 <rect x="2177.200" y="993.800" width="22.800" height="22.800" rx="4.500"/><rect x="2181.400" y="1008.600" width="14.400" height="4.400" rx="1" fill="#5c5c5e" stroke="none"/>
</svg>
<!-- ===== bottom ===== -->
<div class="a" id="split"></div>
<div class="t" style="left:795.500px;top:1684px;font-size:22px;color:#1c1c1e;letter-spacing:.4px">Auto</div>
<div class="t" style="left:1456px;top:1684px;font-size:22px;color:#1c1c1e;letter-spacing:.66px">All Output</div>
<div class="vs" style="left:881px;top:1683px;height:23px"></div>
<div class="vs" style="left:2120px;top:1683px;height:23px"></div>
<div class="ff" style="left:1081px;top:1672px;width:346px"></div>
<div class="ff" style="left:1714px;top:1672px;width:344px"></div>
<svg style="left:846px;top:1676px" width="1366" height="36" viewBox="846 1676 1366 36" fill="none" stroke="#1e1e20" stroke-width="2.200" stroke-linecap="round" stroke-linejoin="round">
 <path d="M852 1692l4-4.400 4 4.400M852 1697l4 4.400 4-4.400" stroke="#2a2a2c" stroke-width="2.200"/>
 <path d="M1568.400 1692l4-4.400 4 4.400M1568.400 1697l4 4.400 4-4.400" stroke="#2a2a2c" stroke-width="2.200"/>
 <g stroke="#b3b3b5" stroke-width="2">
  <path d="M902 1695q6-8.400 13.800-8.400t13.800 8.400q-6 8.400-13.800 8.400t-13.800-8.400z"/><circle cx="915.800" cy="1695" r="4.200" stroke-width="3.800"/>
  <circle cx="970" cy="1694.600" r="12.400"/><path d="M970 1693v7.400" stroke-width="2.400"/><circle cx="970" cy="1688.400" r="1.500" fill="#b3b3b5" stroke="none"/>
 </g>
 <circle cx="1104" cy="1694" r="11.600" stroke-width="2.400"/><path d="M1097.600 1689.600h12.800M1099.800 1694.200h8.400M1102 1698.800h4"/>
 <circle cx="1737" cy="1694" r="11.600" stroke-width="2.400"/><path d="M1730.600 1689.600h12.800M1732.800 1694.200h8.400M1735 1698.800h4"/>
 <g stroke="#6c6c6e" stroke-width="2">
  <path d="M2082.600 1685.600h21M2089.400 1685.200v-2.400q0-1.600 1.600-1.600h4.200q1.600 0 1.600 1.600v2.400M2084.800 1686l1.200 18.400q.2 2.400 2.600 2.400h9q2.400 0 2.600-2.400l1.200-18.400M2089.400 1690.400l.4 11.600M2093.100 1690.400v11.600M2096.800 1690.400l-.4 11.600"/>
 </g>
 <g stroke="#0f5ee8" stroke-width="2.200">
  <rect x="2140.200" y="1681.400" width="23.800" height="24" rx="4.500"/><rect x="2144.600" y="1685.600" width="3.600" height="15.600" rx="1" fill="#0f5ee8" stroke-width="1"/>
  <rect x="2182.200" y="1681.400" width="23.800" height="24" rx="4.500"/><rect x="2198" y="1685.600" width="3.600" height="15.600" rx="1" fill="#0f5ee8" stroke-width="1"/>
 </g>
</svg>
<div class="t" style="left:1126px;top:1684px;font-size:22px;letter-spacing:.43px;color:#a9a9ab">Filter</div>
<div class="t" style="left:1759px;top:1684px;font-size:22px;letter-spacing:.43px;color:#a9a9ab">Filter</div>
<!-- ===== popup menu ===== -->
<div class="a" id="menu"></div>
<div class="a" id="msel"></div>
<div class="mi" style="top:1401px">Swift Error Breakpoint</div>
<div class="mi" style="top:1445px;letter-spacing:.45px">Exception Breakpoint...</div>
<div class="mi" style="top:1489px;color:#fff">Symbolic Breakpoint...</div>
<div class="mi" style="top:1533px;letter-spacing:.31px">Runtime Issue Breakpoint...</div>
<div class="mi" style="top:1577px">Constraint Error Breakpoint</div>
<div class="mi" style="top:1621px;letter-spacing:.38px">Test Failure Breakpoint</div>
</div></div>
</body>
</html>
